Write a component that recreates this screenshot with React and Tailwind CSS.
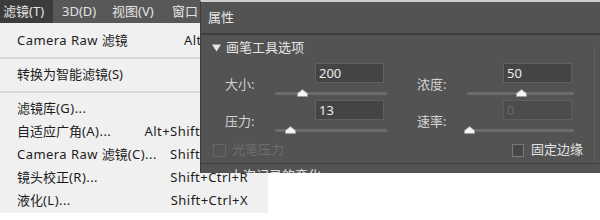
import React from "react";

const FONT = "font-['Noto_Sans','Noto_Sans_CJK_SC',sans-serif]";

function L({ children }) {
  return <span className="tracking-[0.45px]">{children}</span>;
}

function Thumb({ left }) {
  return (
    <svg
      className="absolute top-[6px]"
      style={{ left: `${left}px` }}
      width="11"
      height="8"
      viewBox="0 0 11 8"
    >
      <polygon points="5.5,0.5 10.5,4.5 10.5,7.5 0.5,7.5 0.5,4.5" fill="#f4f4f4" stroke="#9a9a9a" strokeWidth="0.6" />
    </svg>
  );
}

function Control({ label, value, thumb, disabled, sliderW, inputMl }) {
  return (
    <div className="grid grid-cols-[50px_auto] grid-rows-[20px_17px]">
      <div className="row-span-2 pt-[12px] leading-[18px] text-[#d2d2d2]">{label}</div>
      <div style={{ paddingLeft: `${inputMl}px` }} className="flex">
        <div
          className={
            disabled
              ? "w-[69px] h-[20px] border border-[#5e5e5e] bg-[#4c4c4c] pl-[3px] leading-[18px] text-[#686868]"
              : "w-[69px] h-[20px] border border-[#606060] bg-[#444444] pl-[3px] leading-[18px] text-[#ececec]"
          }
        >
          {value}
        </div>
      </div>
      <div className="relative h-[17px]" style={{ width: `${sliderW}px` }}>
        <div className="absolute left-0 right-0 top-[9px] h-[3px] rounded-full bg-[#6c6c6c]" />
        <Thumb left={thumb} />
      </div>
    </div>
  );
}

export default function App() {
  const rows = [
    { t: <>滤镜库<L>(G)...</L></>, k: "", id: "g" },
    { t: <>自适应广角<L>(A)...</L></>, k: "Alt+Shift+Ctrl+A", id: "a" },
    { t: <><L>Camera Raw </L>滤镜<L>(C)...</L></>, k: "Shift+Ctrl+A", id: "c" },
    { t: <>镜头校正<L>(R)...</L></>, k: "Shift+Ctrl+R", id: "r" },
    { t: <>液化<L>(L)...</L></>, k: "Shift+Ctrl+X", id: "l" },
  ];
  return (
    <div className={`relative w-[600px] h-[220px] overflow-hidden bg-white text-[13px] ${FONT}`}>
      {/* menu bar */}
      <div className="flex h-[23px] bg-[#585858] text-[#e4e4e4] leading-[23px]">
        <div className="w-[53px] bg-[#3c3c3c] pl-[3px]">滤镜(T)</div>
        <div className="w-[50px] pl-[9px]">3D(D)</div>
        <div className="w-[60px] pl-[9px]">视图(V)</div>
        <div className="pl-[9px]">窗口</div>
      </div>
      {/* dropdown */}
      <div className="w-[268px] bg-[#f0f0f0] pt-[6px] pb-[1px] text-[#1c1c1c]">
        <div className="flex h-[23px] items-center justify-between pl-[17px] pr-[20px]">
          <span><L>Camera Raw </L>滤镜</span>
          <L>Alt+Ctrl+F</L>
        </div>
        <div className="flex h-[11px] items-center">
          <div className="h-[2px] w-full bg-[#d8d8d8]" />
        </div>
        <div className="flex h-[23px] items-center pl-[17px] pr-[20px]">
          <span>转换为智能滤镜(S)</span>
        </div>
        <div className="flex h-[11px] items-center">
          <div className="h-[2px] w-full bg-[#d8d8d8]" />
        </div>
        {rows.map((r) => (
          <div key={r.id} className="flex h-[23px] items-center justify-between pl-[17px] pr-[20px]">
            <span>{r.t}</span>
            <L>{r.k}</L>
          </div>
        ))}
      </div>

      {/* properties panel (floating over the menu) */}
      <div className="absolute left-[200px] top-0 h-[173px] w-[400px] overflow-hidden border-t-2 border-t-[#cfcfcf] border-l border-l-[#3d3d3d] bg-[#535353]">
        <div className="flex h-[31px] items-center pl-[7px] text-[#e6e6e6]">属性</div>
        <div className="h-[2px] bg-[#3d3d3d]" />
        <div className="flex h-[26px] items-center pl-[11px] text-[#e6e6e6]">
          <svg width="9" height="8" viewBox="0 0 9 8">
            <polygon points="0,0.5 9,0.5 4.5,7.5" fill="#e6e6e6" />
          </svg>
          <span className="ml-[5px]">画笔工具选项</span>
        </div>
        <div className="mt-[2px] flex">
          <div className="flex w-[199px] flex-col pl-[24px]">
            <Control label="大小:" value="200" thumb={22} sliderW={112} inputMl={40} />
            <Control label="压力:" value="13" thumb={10} sliderW={112} inputMl={40} />
          </div>
          <div className="flex flex-col pl-[17px]">
            <Control label="浓度:" value="50" thumb={49} sliderW={107} inputMl={36} />
            <Control label="速率:" value="0" thumb={-3} sliderW={107} inputMl={36} disabled />
          </div>
        </div>
        <div className="mt-[6px] flex h-[14px] items-center">
          <div className="flex w-[199px] items-center pl-[12px]">
            <div className="h-[13px] w-[13px] border border-[#666666]" />
            <span className="ml-[6px] text-[#6e6e6e]">光笔压力</span>
          </div>
          <div className="flex items-center pl-[112px]">
            <div className="h-[13px] w-[12px] border border-[#7a7a7a] bg-[#474747]" />
            <span className="ml-[7px] text-[#e2e2e2]">固定边缘</span>
          </div>
        </div>
        <div className="mt-[6px] h-px bg-[#3f3f3f]" />
        <div className="pl-[29px] pt-[3px] leading-[16px] text-[#e2e2e2]">上次记录的变化</div>
        <div className="absolute right-[5px] top-[43px] h-[118px] w-px bg-[#5f5f5f]" />
      </div>
    </div>
  );
}
